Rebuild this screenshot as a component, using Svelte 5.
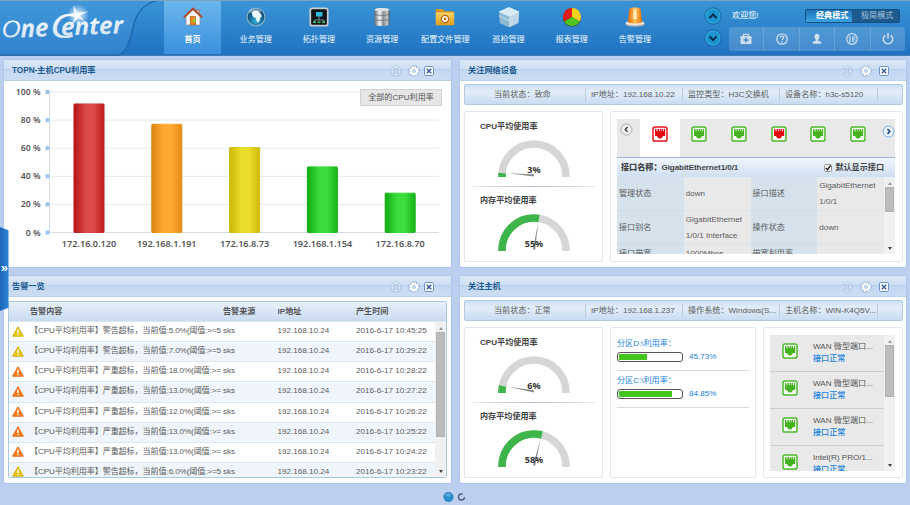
<script>
  const nav = [
    ['home', '首页'], ['globe', '业务管理'], ['topo', '拓扑管理'], ['db', '资源管理'],
    ['folder', '配置文件管理'], ['cube', '巡检管理'], ['pie', '报表管理'], ['alarm', '告警管理']
  ];
  const ticks = [100, 80, 60, 40, 20, 0];
  const bars = [
    { ip: '172.16.0.120', v: 91.5, c: 'red' },
    { ip: '192.168.1.191', v: 77, c: 'orange' },
    { ip: '172.16.8.73', v: 60.5, c: 'yellow' },
    { ip: '192.168.1.154', v: 46.7, c: 'green' },
    { ip: '172.16.8.70', v: 28, c: 'green' }
  ];
  const grads = [
    ['red', '#b81414', '#dd4a4a', '#c01c1c'],
    ['orange', '#dc8410', '#ffa933', '#e28c14'],
    ['yellow', '#cdb808', '#ecdc2c', '#cfba0c'],
    ['green', '#10ac10', '#3cdc3c', '#18b418']
  ];
  const y = (v) => 141 - v * 1.405 + 10.5;
  const alarms = [
    ['warn', '警告', '5.0%(阈值:>=5', '10:45:25'],
    ['warn', '警告', '7.0%(阈值:>=5', '10:29:22'],
    ['major', '严重', '18.0%(阈值:>=', '10:28:22'],
    ['major', '严重', '13.0%(阈值:>=', '10:27:22'],
    ['major', '严重', '12.0%(阈值:>=', '10:26:22'],
    ['major', '严重', '13.0%(阈值:>=', '10:25:22'],
    ['major', '严重', '13.0%(阈值:>=', '10:24:22'],
    ['warn', '警告', '6.0%(阈值:>=5', '10:23:22']
  ];
  const ports = ['rr', 'gg', 'gg', 'gr', 'gg', 'gg'];
  const device = ['当前状态：致命', 'IP地址：192.168.10.22', '监控类型：H3C交换机', '设备名称：h3c-s5120'];
  const host = ['当前状态：正常', 'IP地址：192.168.1.237', '操作系统：Windows(S...', '主机名称：WIN-K4Q5V...'];
  const disks = [['分区D:\\利用率：', 45.73], ['分区C:\\利用率：', 84.85]];
  const nics = ['WAN 微型端口...', 'WAN 微型端口...', 'WAN 微型端口...', 'Intel(R) PRO/1...'];
</script>

{#snippet icon(name)}
  <svg class="nav-icon" width="20" height="20" viewBox="0 0 20 20">
    {#if name === 'home'}
      <path d="M13.6 3h2.6v5h-2.6z" fill="#e9e2d8" stroke="#8f4a2b" stroke-width=".6" />
      <path d="M3 9.5 10 3l7 6.500V18H3z" fill="#fbfaf6" stroke="#8c8278" stroke-width=".7" />
      <path d="M.8 10.400 10 1.500l9.200 8.900" fill="none" stroke="#b5441f" stroke-width="1.700" />
      <rect x="7.200" y="9.500" width="5.400" height="8.300" fill="#f08a1c" stroke="#a75412" stroke-width=".6" />
      <circle cx="11.300" cy="13.500" r="1.400" fill="#79d83a" />
    {:else if name === 'globe'}
      <circle cx="10" cy="10" r="8.900" fill="url(#globeG)" stroke="#7fb0c8" stroke-width="1.200" />
      <path d="M6.500 4.500c2-1.300 4.500-1.200 6-.3l1 1.800 1.500.8.8 2.700-1.600 1.500-.7 3-1.700 1.700-1.500-2.200-.3-2.500-2.500-.8-1.500-2.500z" fill="#e9f5fa" />
      <ellipse cx="9" cy="4.200" rx="6" ry="2.800" fill="#fff" opacity=".4" />
    {:else if name === 'topo'}
      <rect x="1.300" y="1.300" width="17.400" height="17.400" rx="2" fill="#0d1417" stroke="#c9cdd0" stroke-width="1.700" />
      <path d="M7 5h6.500v4.500H7z" fill="#31b8dd" /><path d="M10 9v4M5.500 15v-2h9.500v2" stroke="#94a5aa" stroke-width=".8" fill="none" />
      <path d="M4 14.500h3v1.500H4zM8.500 14.500h3V16h-3zM13 14.500h3V16h-3z" fill="#37c760" />
    {:else if name === 'db'}
      <path d="M2.500 2.800c0-2.400 15-2.400 15 0v14.400c0 2.400-15 2.400-15 0z" fill="url(#metalG)" />
      <ellipse cx="10" cy="2.700" rx="7.500" ry="1.600" fill="#dfe1e2" />
      <path d="M2.500 7c0 1.800 15 1.800 15 0M2.500 12c0 1.800 15 1.800 15 0" stroke="#5e6366" stroke-width=".7" fill="none" />
    {:else if name === 'folder'}
      <path d="M.8 2h7l2 2.200h9V18H.8z" fill="#d79418" /><path d="M.8 5.500h18.400V18.300H.8z" fill="url(#foldG)" />
      <circle cx="10" cy="12" r="3.600" fill="#fff" stroke="#b56510" stroke-width="1.300" /><circle cx="10" cy="12" r="1.400" fill="#e56a15" />
    {:else if name === 'cube'}
      <path d="m10 0 10.200 4.500L10 9 0 4.500z" fill="#d7eaf4" /><path d="M0 4.500 10 9v11.500L.8 16z" fill="#8fb9d2" /><path d="M20.200 4.500 10 9v11.500L19.500 16z" fill="#bfd6e4" />
      <path d="M0 8.300 10 13v1.200L0 9.500z" fill="#b7d6e6" /><path d="M0 4.500 10 9l10-4.500" fill="none" stroke="#fff" stroke-width=".7" />
    {:else if name === 'pie'}
      <circle cx="10" cy="10.600" r="9.200" fill="#3c4b2c" />
      <path d="M10 10V1.100a8.900 8.900 0 0 0-7.700 13.400z" fill="#dc1d1b" /><path d="M10 10V1.100a8.900 8.900 0 0 1 7.700 13.400z" fill="#f8cf18" /><path d="m10 10-7.700 4.500a8.900 8.900 0 0 0 15.400 0z" fill="#4fc422" />
    {:else}
      <ellipse cx="10" cy="17" rx="9.800" ry="2.800" fill="#b9b6ae" /><ellipse cx="10" cy="15.900" rx="9.300" ry="2.400" fill="#eceae4" />
      <path d="M4.300 2.200C4.500 0 15.500 0 15.700 2.200L17 15c0 2-14 2-14 0z" fill="url(#lampG)" />
      <path d="M8.500 2h3l.5 10H8z" fill="#fff2c8" opacity=".8" />
    {/if}
  </svg>
{/snippet}

{#snippet panelHead(title, wide = false)}
  <div class="phead" class:wide>
    <h2>{title}</h2>
    <div class="tools">
      <svg width="12" height="12" viewBox="0 0 12 12" fill="none">
        <circle cx="6" cy="6" r="4" stroke="#8eabce" stroke-width="2.600" /><circle cx="6" cy="6" r="4" stroke="#e9f3fd" stroke-width="1.500" />
        <path d="M7 5.800h4.500l-2 2.600z" fill="#f5faff" stroke="#8eabce" stroke-width=".5" />
      </svg>
      <svg width="12" height="12" viewBox="0 0 12 12" fill="none">
        <circle cx="6" cy="6" r="4" stroke="#7b9dc8" stroke-width="3.400" stroke-dasharray="1.900 1.240" />
        <circle cx="6" cy="6" r="3" stroke="#7b9dc8" stroke-width="3" />
        <circle cx="6" cy="6" r="4" stroke="#fff" stroke-width="2.200" stroke-dasharray="1.700 1.440" />
        <circle cx="6" cy="6" r="2.800" stroke="#fff" stroke-width="2" />
      </svg>
      <svg width="12" height="12" viewBox="0 0 12 12">
        <rect x="1.500" y="1.500" width="9" height="9" rx="1.300" fill="#f8fbff" stroke="#6d93c8" />
        <path d="m3.800 3.800 4.400 4.400m0-4.400-4.400 4.400" stroke="#3c5f9b" stroke-width="1.400" />
      </svg>
    </div>
  </div>
{/snippet}

{#snippet info(items)}
  <div class="info">
    {#each items as t}<span>{t}</span>{/each}
  </div>
{/snippet}

{#snippet gauge(label, pct)}
  <div class="gauge">
    <h3>{label}</h3>
    <svg width="72" height="38" viewBox="0 0 72 38">
      <path d="M4 37V36a32 32 0 0 1 64 0v1" fill="none" stroke="#d6d6d6" stroke-width="7.600" />
      <path d="M4 37V36a32 32 0 0 1 64 0v1" pathLength="102" fill="none" stroke="#3db54a" stroke-width="7.600" stroke-dasharray="{pct + 1} 200" />
      <path d="M8 35.700 36 34.300v2.200z" fill="#8c8c8c" transform="rotate({pct * 1.8} 36 35.500)" />
      <text x="36" y="33" text-anchor="middle">{pct}%</text>
    </svg>
  </div>
{/snippet}

{#snippet port(kind)}
  {@const frame = kind[0] === 'r' ? '#e8151b' : '#4cb82c'}
  {@const fill = kind[1] === 'r' ? '#e30613' : '#45b31f'}
  <svg width="16" height="16" viewBox="0 0 16 16">
    <rect x="1" y="1" width="14" height="14" rx="1.800" fill="#fff" stroke={frame} stroke-width="1.500" />
    <path d="M3 3h1.500v2.200h1V3H7v2.200h.6V3h1.300v2.200h.6V3H11v2.200h.9V3h1.300v7h-2l-2 2.500H6.800l-2-2.500H3z" fill={fill} />
  </svg>
{/snippet}

{#snippet scroll(start, size)}
  <div class="scroll">
    <i class="up"></i>
    <b style="margin-top:{start}px;height:{size}px"></b>
    <i class="down"></i>
  </div>
{/snippet}

<div class="app">
  <svg class="defs" width="0" height="0">
    <defs>
      <radialGradient id="globeG" cx=".5" cy=".7"><stop offset="0" stop-color="#37b4e0" /><stop offset="1" stop-color="#0b4e7c" /></radialGradient>
      <linearGradient id="metalG"><stop offset="0" stop-color="#6d7174" /><stop offset=".35" stop-color="#f5f6f6" /><stop offset=".6" stop-color="#8b9093" /><stop offset=".85" stop-color="#c9cccd" /><stop offset="1" stop-color="#565a5d" /></linearGradient>
      <linearGradient id="foldG" x2="0" y2="1"><stop offset="0" stop-color="#fbd565" /><stop offset="1" stop-color="#e09b1b" /></linearGradient>
      <linearGradient id="lampG"><stop offset="0" stop-color="#e06a0c" /><stop offset=".5" stop-color="#ffc357" /><stop offset="1" stop-color="#e8720e" /></linearGradient>
      <linearGradient id="logoG" x2="0" y2="1"><stop offset="0" stop-color="#fff" /><stop offset="1" stop-color="#c9dff2" /></linearGradient>
      <radialGradient id="starG"><stop offset="0" stop-color="#fff" stop-opacity=".9" /><stop offset="1" stop-color="#fff" stop-opacity="0" /></radialGradient>
    </defs>
  </svg>

  <header>
    <svg class="logo" width="161" height="55" viewBox="0 0 161 55">
      <path d="M0 0h156c-13 3-19 12-22 23-4 15-6 27-15 31H0z" fill="#4a9ade" opacity=".4" />
      <path d="M156 0c-13 3-19 12-22 23-4 15-6 27-15 31H0" fill="none" stroke="#1c62a6" stroke-width="1.200" />
      <g fill="url(#logoG)" transform="rotate(-2 60 30)">
        <text x="1" y="34.500" font-size="23" textLength="20" lengthAdjust="spacingAndGlyphs" class="round">O</text>
        <text x="20.500" y="35" font-size="25" textLength="28" lengthAdjust="spacingAndGlyphs">ne</text>
        <text x="49.500" y="37" font-size="33" textLength="27" lengthAdjust="spacingAndGlyphs" class="round">C</text>
        <text x="61" y="34.500" font-size="24" textLength="62" lengthAdjust="spacingAndGlyphs">enter</text>
      </g>
      <circle cx="78" cy="14" r="11" fill="url(#starG)" />
      <path d="m73.500 4 4 7.500 11-1-9 4 5 5.500-6.500-3-6.500 7 3-8-11-2 10.500-1z" fill="#fff" opacity=".8" />
    </svg>

    <nav>
      {#each nav as [name, label], i}
        <a class:on={i === 0} href="#{name}">{@render icon(name)}<span>{label}</span></a>
      {/each}
    </nav>

    <div class="arrows">
      {#each ['m5.500 11 3.500-3.500 3.500 3.500', 'm5.500 7.500 3.500 3.500 3.500-3.500'] as d}
        <svg width="18" height="18" viewBox="0 0 18 18"><circle cx="9" cy="9" r="8.200" fill="#1b93cf" stroke="#1768a6" /><circle cx="9" cy="9" r="7" fill="none" stroke="#43b2e0" stroke-width=".8" /><path {d} fill="none" stroke="#0b2c4c" stroke-width="2" /></svg>
      {/each}
    </div>

    <div class="user">
      <div class="top">
        <span>欢迎您!</span>
        <div class="mode"><b>经典模式</b><i>极简模式</i></div>
      </div>
      <div class="bar">
        <span><svg width="14" height="14" viewBox="0 0 14 14"><path d="M4.500 4V2.300h5V4" fill="none" stroke="#cfdeed" stroke-width="1.300" /><rect x="1.500" y="4" width="11" height="8" rx=".8" fill="#cfdeed" /><path d="M7 5.500v5M4.500 8h5" stroke="#3c82c4" stroke-width="1.300" /></svg></span>
        <span><svg width="14" height="14" viewBox="0 0 14 14" fill="none" stroke="#cfdeed"><circle cx="7" cy="7" r="5.200" stroke-width="1.300" /><path d="M5.300 5.800c0-2.300 3.500-2.200 3.500-.2C8.800 6.800 7 6.900 7 8.300M7 9.300v1.200" stroke-width="1.300" /></svg></span>
        <span><svg width="14" height="14" viewBox="0 0 14 14" fill="#cfdeed"><ellipse cx="7" cy="4.700" rx="2.400" ry="3" /><path d="M5.800 7h2.400v1.800l3 .9v2H2.800v-2l3-.9z" /></svg></span>
        <span><svg width="14" height="14" viewBox="0 0 14 14" fill="none" stroke="#cfdeed"><circle cx="7" cy="7" r="5.300" stroke-width="1.200" /><path d="M4 4.800h1v4.500M4 9.300h2M10.500 5H7.700v4.200h2.800M8 7h2.300" stroke-width="1.100" /></svg></span>
        <span><svg width="14" height="14" viewBox="0 0 14 14" fill="none" stroke="#cfdeed" stroke-width="1.500"><path d="M4.300 3.200a4.700 4.700 0 1 0 5.400 0M7 1v5.500" /></svg></span>
      </div>
    </div>
  </header>

  <main>
    <section class="panel">
      {@render panelHead('TOPN-主机CPU利用率')}
      <div class="chart">
        <svg width="447" height="186" viewBox="0 0 447 186">
          <defs>
            {#each grads as [id, a, b, c]}
              <linearGradient {id}><stop offset="0" stop-color={a} /><stop offset=".4" stop-color={b} /><stop offset=".65" stop-color={b} /><stop offset="1" stop-color={c} /></linearGradient>
            {/each}
          </defs>
          {#each ticks as t}
            <path d="M46 {y(t)}H435" stroke={t ? '#e3eaee' : '#d5dde3'} />
            <text x="36.500" y={y(t) + 3} text-anchor="end">{t} %</text>
          {/each}
          <path d="M45.500 11V152" stroke="#d3dbe2" />
          {#each ticks as t}<rect x="41.500" y={y(t) - 2} width="4" height="4" fill="#9fc3ea" />{/each}
          {#each bars as b, i}
            <rect x={70 + i * 77.8} y={y(b.v)} width="30" height={b.v * 1.405} rx=".8" fill="url(#{b.c})" stroke="url(#{b.c})" />
            <text class="ip" x={85 + i * 77.8} y="166" text-anchor="middle">{b.ip}</text>
          {/each}
        </svg>
        <button>全部的CPU利用率</button>
      </div>
    </section>

    <section class="panel">
      {@render panelHead('关注网络设备', true)}
      <div class="body">
        {@render info(device)}
        <div class="cards">
          <div class="card gauges">
            {@render gauge('CPU平均使用率', 3)}
            <hr />
            {@render gauge('内存平均使用率', 55)}
          </div>
          <div class="card iface">
            <div class="tabs">
              <div class="arrow"><svg width="13" height="13" viewBox="0 0 13 13"><circle cx="6.500" cy="6.500" r="5.500" fill="#f1f1f1" stroke="#aaa" /><path d="M7.500 4 5.200 6.500 7.500 9" fill="none" stroke="#333" stroke-width="1.300" /></svg></div>
              {#each ports as p, i}<div class="tab" class:on={i === 0}>{@render port(p)}</div>{/each}
              <div class="arrow next"><svg width="13" height="13" viewBox="0 0 13 13"><circle cx="6.500" cy="6.500" r="5.500" fill="#eef5ff" stroke="#7ba6d9" /><path d="M5.500 4 7.800 6.500 5.500 9" fill="none" stroke="#1b3f77" stroke-width="1.600" /></svg></div>
            </div>
            <div class="ihead">
              <b>接口名称：<em>GigabitEthernet1/0/1</em></b>
              <label><svg width="8" height="8" viewBox="0 0 8 8"><rect x=".5" y=".5" width="7" height="7" rx="1" fill="#f4f4f4" stroke="#999" /><path d="m1.800 4 1.600 1.700L6.600 1.500" fill="none" stroke="#222" stroke-width="1.400" /></svg>默认显示接口</label>
            </div>
            <div class="iwrap">
              <div class="grid">
                <div>管理状态</div><div>down</div><div>接口描述</div><div>GigabitEthernet 1/0/1</div>
                <div>接口别名</div><div>GigabitEthernet 1/0/1 Interface</div><div>操作状态</div><div>down</div>
                <div class="cut">接口带宽</div><div class="cut">1000Mbps</div><div class="cut">带宽利用率</div><div></div>
              </div>
              {@render scroll(2, 25)}
            </div>
          </div>
        </div>
      </div>
    </section>

    <section class="panel">
      {@render panelHead('告警一览')}
      <div class="table">
        <div class="row th"><span></span><span>告警内容</span><span>告警来源</span><span>IP地址</span><span>产生时间</span></div>
        <div class="twrap">
          <div class="rows">
            {#each alarms as [lv, kind, val, time]}
              <div class="row">
                <span><svg width="12" height="11" viewBox="0 0 12 11"><path d="M6 .8 11.300 10.200H.7z" fill={lv === 'warn' ? '#e9c70f' : '#fa7d1c'} stroke={lv === 'warn' ? '#cfae0b' : '#e06a12'} stroke-width="1" stroke-linejoin="round" /><path d="M6 3.500V7M6 8v1.300" stroke="#fff" stroke-width="1.400" /></svg></span>
                <span class="msg">【CPU平均利用率】{kind}超标，当前值:{val}</span><span>sks</span><span>192.168.10.24</span><span>2016-6-17 {time}</span>
              </div>
            {/each}
          </div>
          {@render scroll(2, 105)}
        </div>
      </div>
    </section>

    <section class="panel">
      {@render panelHead('关注主机', true)}
      <div class="body">
        {@render info(host)}
        <div class="cards">
          <div class="card gauges">
            {@render gauge('CPU平均使用率', 6)}
            <hr />
            {@render gauge('内存平均使用率', 58)}
          </div>
          <div class="card disks">
            {#each disks as [label, v]}
              <div class="disk">
                <p>{label}</p>
                <div><div class="meter"><i style="width:{v}%"></i></div>{v}%</div>
              </div>
            {/each}
          </div>
          <div class="card nics">
            <div class="list">
              {#each nics as n}
                <div class="nic">{@render port('gg')}<p>{n}<b>接口正常</b></p></div>
              {/each}
            </div>
            {@render scroll(2, 52)}
          </div>
        </div>
      </div>
    </section>
  </main>

  <footer>
    <svg width="26" height="12" viewBox="0 0 26 12"><circle cx="6.500" cy="6" r="4.600" fill="#2a8fcb" stroke="#1d78b3" stroke-width=".8" /><circle cx="19.500" cy="6" r="3" fill="none" stroke="#4c5d75" stroke-width="1.300" stroke-dasharray="15 3.800" /><ellipse cx="6" cy="4" rx="2.600" ry="1.500" fill="#7fc5ea" opacity=".6" /></svg>
  </footer>

  <aside><span>»</span></aside>
</div>

<style>
  :global(body) { background: #bdcfee; }
  .app {
    position: relative; width: 910px; height: 505px; overflow: hidden; background: #bdcfee;
    font: 8.1px/12px "Liberation Sans", "Noto Sans CJK SC", sans-serif; color: #5c5c5c;
    display: flex; flex-direction: column;
  }
  .app :global(*) { box-sizing: border-box; }
  h2, h3, p, hr { margin: 0; }
  svg { display: block; flex: none; }
  .defs { position: absolute; }

  header {
    height: 56px; flex: none; display: flex; border-top: 1px solid #7ba5bf; border-bottom: 1px solid #4079ad;
    background: linear-gradient(#3994d6, #2072c2);
  }
  .logo { width: 161px; }
  .logo text { font-family: "Open Sans", "Noto Sans", sans-serif; font-style: italic; font-weight: 700; }
  .logo text.round { font-weight: 400; }
  nav { display: flex; width: 506px; margin-left: 0; }
  nav a {
    width: 57.200px; margin: 0 3px; flex: none; height: 53px; display: flex; flex-direction: column; align-items: center;
    color: #f2f8fd; text-decoration: none; white-space: nowrap; padding-top: 6px;
  }
  nav a.on { background: linear-gradient(#6bb6ea, #3a90de); color: #fff; font-weight: 700; }
  nav a span { margin-top: 7px; }
  .arrows { margin-left: 37px; padding-top: 6px; display: flex; flex-direction: column; gap: 4px; }
  .user { margin-left: 7px; width: 176px; }
  .top { display: flex; justify-content: space-between; height: 26px; padding: 8px 5px 0 3px; color: #fff; line-height: 13px; }
  .mode { display: flex; width: 95px; height: 14px; border: 1px solid #14507f; border-radius: 2px; line-height: 12px; }
  .mode b { width: 46px; background: linear-gradient(#1a73ba, #3ba3e2); padding-left: 10px; font-weight: 700; white-space: nowrap; }
  .mode i { flex: 1; background: #1d5b8f; color: #a5c2da; font-style: normal; padding-left: 9px; white-space: nowrap; }
  .bar { display: flex; height: 24px; border-radius: 3px; background: rgba(255, 255, 255, .17); }
  .bar span { flex: 1; display: flex; align-items: center; justify-content: center; }
  .bar span + span { border-left: 1px solid rgba(255, 255, 255, .16); }

  main {
    display: grid; grid-template-columns: 449px 448px; grid-template-rows: 209px 209px; gap: 7px;
    padding: 3px 3px 0; flex: none;
  }
  .panel {
    background: #fff; border: 1px solid #a9c6ec; border-radius: 3px; overflow: hidden;
    display: flex; flex-direction: column; min-width: 0;
  }
  .phead {
    height: 21px; flex: none; display: flex; justify-content: space-between; align-items: center; padding: 1px 16.500px 0 8px;
    background: linear-gradient(#dae8f8, #cfe0f5 44%, #b8d0ef 46%, #c5d9f2 55%, #cbddf4);
    border-bottom: 1px solid #b9cfe9;
  }
  .tools { display: flex; width: 45px; justify-content: space-between; }
  .tools svg:nth-child(2) { margin-left: 4px; }
  .wide .tools { width: 49px; }
  .wide .tools svg:nth-child(2) { margin-left: 1px; }
  .phead.wide { padding-right: 16px; }
  h2 { font-size: 8.200px; line-height: 12px; color: #1f5b8e; font-weight: 700; }
  .chart { position: relative; }
  .chart text { font: 600 8.700px "Noto Sans", sans-serif; fill: #555; }
  .chart text.ip { font-size: 9.100px; }
  .chart button {
    position: absolute; left: 356px; top: 8px; width: 82px; height: 17px; padding: 0; border: 1px solid #d2d2d2;
    background: #e6e6e6; color: #555; font: inherit; line-height: 14px;
  }

  .body { padding: 3px 4px 0; }
  .info {
    height: 21px; width: 439px; border: 1px solid #b4c8df; border-radius: 2px; display: flex; align-items: center;
    background: linear-gradient(#cfdff0, #e2edf8 35%, #c9dcf3);
  }
  .info span { width: 97px; padding-left: 5px; white-space: nowrap; line-height: 14px; border-right: 1px solid #bccbdd; }
  .info span:first-child { width: 121px; padding-left: 29px; }
  .info span:last-child { width: 98px; }
  .cards { display: flex; gap: 7px; margin-top: 6px; }
  .card { height: 151px; border: 1px solid #e4e6e8; border-radius: 2px; flex: none; box-shadow: 0 0 1px #eee; }
  .gauges { width: 139px; padding: 9px 7px 0; }
  .gauge { height: 65px; }
  .gauge h3 { font-size: 8.100px; line-height: 12px; color: #444; font-weight: 700; padding-left: 8px; }
  .gauge svg { margin: 7px 0 0 25.500px; }
  .gauge text { font: 700 9px "Noto Sans", sans-serif; fill: #333; }
  hr { height: 1px; border: 0; margin-bottom: 8px; background: linear-gradient(90deg, #e6eaf0, #b4bccb 50%, #e6eaf0); }

  .iface { width: 293px; padding: 7px 6px 0; }
  .tabs { display: flex; height: 38px; background: #e9e9e9; width: 278px; }
  .arrow { width: 23px; padding: 4px 0 0 3px; flex: none; }
  .arrow.next { padding: 6px 0 0 4px; width: 17px; }
  .tab { width: 39.600px; display: flex; justify-content: center; padding-top: 7px; flex: none; }
  .tab.on { background: #fff; }
  .ihead {
    height: 20px; width: 278px; display: flex; justify-content: space-between; align-items: center; padding: 0 11px 0 4px;
    border-top: 1px solid #9db6d8; background: linear-gradient(#f1f6fc, #cfdff2); color: #444; font-weight: 700;
  }
  .ihead em { font-style: normal; letter-spacing: -.1px; }
  .ihead label { display: flex; align-items: center; gap: 3px; }
  .iwrap { display: flex; height: 77px; width: 278px; overflow: hidden; }
  .grid { display: grid; grid-template-columns: repeat(4, 66.750px); grid-auto-rows: 34px; width: 267px; line-height: 16px; flex: none; }
  .grid div { background: #e9e9e9; padding: 0 2px; display: flex; align-items: center; border-bottom: 1px solid #dfe4e8; }
  .grid div:nth-child(odd) { background: #d5e2eb; border-bottom-color: #cddbe6; }
  .grid .cut { align-items: flex-start; white-space: nowrap; padding-top: 1px; }

  .scroll { width: 11px; flex: none; background: #f1f1f1; display: flex; flex-direction: column; align-items: center; }
  .scroll i { width: 0; height: 0; border: 2.500px solid transparent; }
  .scroll .up { border-top: 0; border-bottom: 3px solid #999; margin-top: 5px; }
  .scroll .down { border-bottom: 0; border-top: 3px solid #444; margin: auto 0 4px; }
  .scroll b { width: 9px; background: #bcbcbc; flex: none; border: 1px solid #b2b2b2; }

  .table { margin: 4px 0 0 4px; width: 439px; height: 177px; border: 1px solid #a9c9e2; border-radius: 2px; overflow: hidden; }
  .row { display: grid; grid-template-columns: 21px 193px 54.500px 78.500px 1fr; align-items: center; height: 20.140px; border-bottom: 1px solid #dfe7ee; white-space: nowrap; line-height: 14px; }
  .row span { overflow: hidden; }
  .row .msg { letter-spacing: -.11px; }
  .row span:first-child { padding-left: 3px; }
  .th { height: 20px; background: linear-gradient(#e8f1fa, #c9dbf1); color: #555; font-weight: 700; }
  .twrap { display: flex; height: 155px; overflow: hidden; }
  .rows { flex: 1; }
  .rows .row { padding-bottom: 1px; }
  .rows .row:nth-child(even) { background: #eff5fa; }

  .disks { width: 146px; padding: 10px 6px 0; color: #1b83e0; }
  .disk { height: 33px; border-bottom: 1px solid #d6dae2; }
  .disk + .disk { height: 37px; padding-top: 4px; }
  .disk p { line-height: 12px; margin-bottom: 2px; }
  .disk > div { display: flex; align-items: center; gap: 6px; line-height: 10px; }
  .meter { width: 66px; height: 10px; border: 1px solid #555; border-radius: 3px; background: #fff; overflow: hidden; padding: 1px; }
  .meter i { display: block; height: 6px; background: #42c51c; }
  .nics { width: 140px; padding: 7px 0 0 6px; display: flex; }
  .list { width: 114px; height: 136px; overflow: hidden; background: #e9e9e9; }
  .nics :global(.scroll) { height: 136px; }
  .nic { height: 37px; display: flex; padding: 6px 0 0 12px; border-bottom: 1.500px solid #c9ccd6; }
  .nic :global(svg) { margin-top: 1.500px; }
  .nic p { margin-left: 15px; white-space: nowrap; line-height: 12px; color: #555; }
  .nic b { display: block; color: #1b83e0; font-weight: 500; }

  footer { display: flex; justify-content: center; padding: 7px 0 0 0; }
  aside {
    position: absolute; left: 0; top: 227px; width: 8.500px; height: 84px; background: linear-gradient(90deg, #1c66bd, #2b86d6);
    clip-path: polygon(0 0, 100% 4%, 100% 96%, 0 100%); color: #fff; font: 700 13px/81px "Liberation Sans", sans-serif; text-align: center;
  }
</style>
